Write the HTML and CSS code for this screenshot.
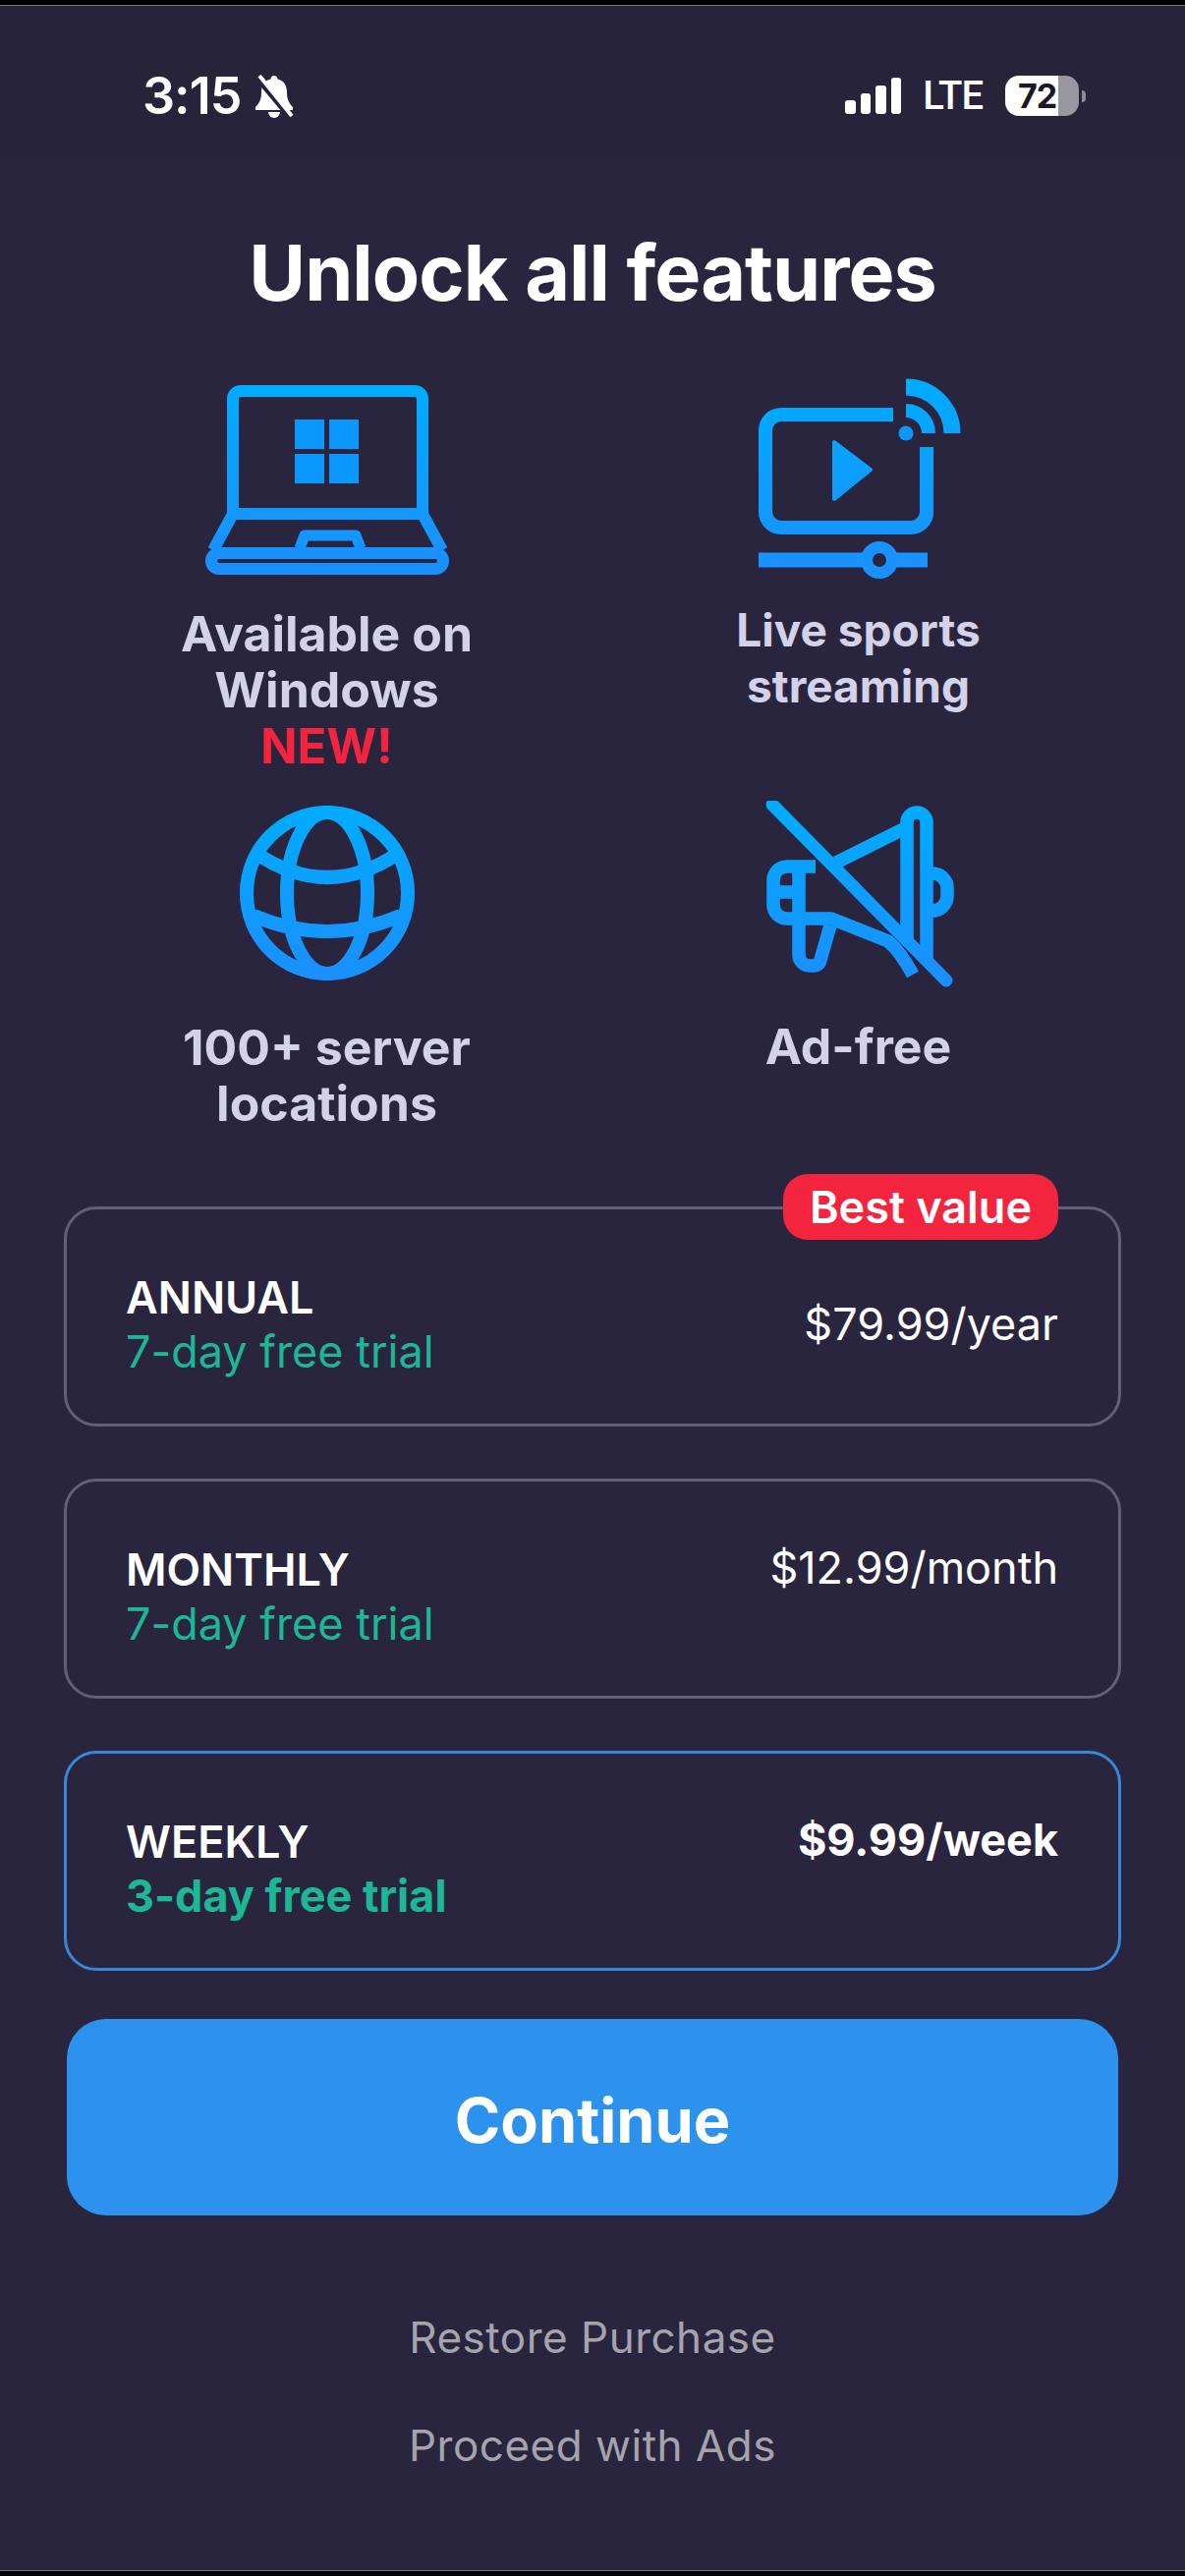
FILE: index.html
```html
<!DOCTYPE html>
<html lang="en">
<head>
<meta charset="utf-8">
<title>Unlock all features</title>
<link rel="stylesheet" href="styles.css">
</head>
<body>
<div class="screen">
  <div class="edge edge-top"></div>
  <header class="status">
    <div class="status-left">
      <span class="time">3:15</span>
      <svg class="bell" viewBox="0 0 42 44" aria-hidden="true">
        <path class="bell-body" d="M21 1c2 0 3.500 1.500 3.500 3.500C31 6 34 11 34 18c0 7 2 11 6 15v3H2v-3c4-4 6-8 6-15C8 11 11 6 17.500 4.500 17.500 2.500 19 1 21 1z"/>
        <path class="bell-body" d="M15 38h12a6 6 0 0 1-12 0z"/>
        <path class="bell-gap" d="M2 1l36 43"/>
        <path class="bell-slash" d="M6 1l33 41"/>
      </svg>
    </div>
    <div class="status-right">
      <div class="signal"><i class="bar b1"></i><i class="bar b2"></i><i class="bar b3"></i><i class="bar b4"></i></div>
      <span class="lte">LTE</span>
      <div class="battery"><span class="battery-num">72</span></div>
      <i class="battery-nub"></i>
    </div>
  </header>

  <main class="main">
    <h1 class="title">Unlock all features</h1>

    <section class="features">
      <div class="feature">
        <svg class="icon" width="304" height="232" viewBox="0 25 304 232" aria-hidden="true">
          <defs><linearGradient id="g1" gradientUnits="userSpaceOnUse" x1="0" y1="30" x2="0" y2="226"><stop offset="0" stop-color="#00acff"/><stop offset="1" stop-color="#1b8fff"/></linearGradient></defs>
          <g fill="none" stroke="url(#g1)" stroke-width="12" stroke-linejoin="round">
            <path d="M56 163V46a8 8 0 0 1 8-8H241a8 8 0 0 1 8 8V163H56"/>
            <path d="M56 163L36 200M249 163L269 200"/>
            <rect x="34" y="203" width="236" height="16" rx="8"/>
            <path stroke-width="11" d="M124 198L129 185H181L186 198"/>
          </g>
          <g fill="#0a98ff">
            <rect x="119" y="67" width="30" height="30"/><rect x="154" y="67" width="30" height="30"/>
            <rect x="119" y="102" width="30" height="30"/><rect x="154" y="102" width="30" height="30"/>
          </g>
        </svg>
        <p class="feature-text">Available on<br>Windows</p>
        <p class="feature-new">NEW!</p>
      </div>

      <div class="feature">
        <svg class="icon" width="266" height="228" viewBox="0 25 266 228" aria-hidden="true">
          <defs><linearGradient id="g2" gradientUnits="userSpaceOnUse" x1="0" y1="25" x2="0" y2="232"><stop offset="0" stop-color="#00acff"/><stop offset="1" stop-color="#1b8fff"/></linearGradient></defs>
          <g fill="none" stroke="url(#g2)">
            <path stroke-width="14" d="M168 62H54a16 16 0 0 0-16 16V161a16 16 0 0 0 16 16H186a16 16 0 0 0 16-16V95"/>
            <path stroke-width="14" d="M181 58A23 23 0 0 1 204 81"/>
            <path stroke-width="17" d="M181 34A47 47 0 0 1 228 81"/>
            <path stroke-width="15" d="M31 210H138M170 210H203"/>
            <circle cx="154" cy="210" r="13" stroke-width="12"/>
          </g>
          <circle cx="181" cy="81" r="7.500" fill="#0a98ff"/>
          <path fill="url(#g2)" stroke="url(#g2)" stroke-width="4" stroke-linejoin="round" d="M108 90L108 148L145 118Z"/>
        </svg>
        <p class="feature-text feature-text-small">Live sports<br>streaming</p>
      </div>

      <div class="feature">
        <svg class="icon" width="226" height="223" viewBox="0 15 226 223" aria-hidden="true">
          <defs><linearGradient id="g3" gradientUnits="userSpaceOnUse" x1="0" y1="20" x2="0" y2="198"><stop offset="0" stop-color="#00acff"/><stop offset="1" stop-color="#1b8fff"/></linearGradient></defs>
          <g fill="none" stroke="url(#g3)" stroke-width="14">
            <circle cx="113" cy="109" r="82"/>
            <ellipse cx="113" cy="109" rx="41" ry="82"/>
            <path d="M40 68Q113 118 186 68"/>
            <path d="M38 132Q113 164 188 132"/>
          </g>
        </svg>
        <p class="feature-text">100+ server<br>locations</p>
      </div>

      <div class="feature">
        <svg class="icon" width="246" height="222" viewBox="0 15 246 222" aria-hidden="true">
          <defs><linearGradient id="g4" gradientUnits="userSpaceOnUse" x1="0" y1="20" x2="0" y2="200"><stop offset="0" stop-color="#00acff"/><stop offset="1" stop-color="#1b8fff"/></linearGradient></defs>
          <g fill="none" stroke="url(#g4)" stroke-width="13.500" stroke-linejoin="round">
            <path d="M172 157V37a10 10 0 0 1 20 0V178"/>
            <path d="M172 42L100 78"/>
            <path d="M192 89H198a15 15 0 0 1 15 15V112a15 15 0 0 1-15 15H192"/>
            <path d="M79 82H50a14 14 0 0 0-14 14V121a14 14 0 0 0 14 14H95L153 158Q165 168 178 192"/>
            <path d="M36 108H62"/>
            <path d="M62 82V172a11 11 0 0 0 11 11H77a7 7 0 0 0 7-6L94 142"/>
            <path stroke-width="13" stroke-linecap="round" d="M35 19L212 198"/>
          </g>
        </svg>
        <p class="feature-text">Ad-free</p>
      </div>
    </section>

    <section class="plans">
      <div class="plan">
        <span class="badge">Best value</span>
        <div class="plan-info">
          <div class="plan-name">ANNUAL</div>
          <div class="plan-trial">7-day free trial</div>
        </div>
        <div class="plan-price plan-price-center">$79.99/year</div>
      </div>
      <div class="plan">
        <div class="plan-info">
          <div class="plan-name">MONTHLY</div>
          <div class="plan-trial">7-day free trial</div>
        </div>
        <div class="plan-price">$12.99/month</div>
      </div>
      <div class="plan plan-selected">
        <div class="plan-info">
          <div class="plan-name">WEEKLY</div>
          <div class="plan-trial">3-day free trial</div>
        </div>
        <div class="plan-price">$9.99/week</div>
      </div>
    </section>

    <button class="continue" type="button">Continue</button>

    <div class="links">
      <a class="link">Restore Purchase</a>
      <a class="link">Proceed with Ads</a>
    </div>
  </main>
  <div class="edge edge-bottom"></div>
</div>
</body>
</html>
```

FILE: styles.css
```css
* { box-sizing: border-box; }
html, body { margin: 0; padding: 0; }
body {
  background: #29253f;
  font-family: "Inter", "Liberation Sans", sans-serif;
  color: #fff;
}
.screen {
  width: 1206px;
  height: 2622px;
  display: flex;
  flex-direction: column;
  overflow: hidden;
  background: #29253f;
}
.edge { background: #000; flex: none; }
.edge-top { height: 6px; border-bottom: 1px solid #77767e; }
.edge-bottom { height: 6px; margin-top: auto; border-top: 1px solid #77767e; }

.status {
  flex: none;
  height: 185px;
  padding: 0 101px 0 145px;
  display: flex;
  justify-content: space-between;
  align-items: flex-start;
  background: linear-gradient(#26233b 0, #26233b 154px, #28243d 154px);
}
.status-left, .status-right { display: flex; align-items: center; height: 41px; margin-top: 71px; }
.time { font-size: 52px; font-weight: 600; letter-spacing: -1px; line-height: 41px; }
.bell { width: 42px; height: 44px; margin-left: 13px; }
.bell-body { fill: #fff; }
.bell-gap { stroke: #26233b; stroke-width: 6; fill: none; }
.bell-slash { stroke: #fff; stroke-width: 4; fill: none; }

.signal { display: flex; align-items: flex-end; gap: 5px; height: 37px; }
.bar { display: block; width: 10.500px; background: #fff; border-radius: 3px; }
.b1 { height: 14px; }
.b2 { height: 21px; }
.b3 { height: 29px; }
.b4 { height: 37px; }
.lte { font-family: "Roboto", sans-serif; font-size: 40px; font-weight: 500; margin-left: 22px; line-height: 41px; letter-spacing: -1px; }
.battery {
  width: 75px; height: 41px; margin-left: 23px; border-radius: 14px;
  background: linear-gradient(90deg, #fff 0, #fff 54px, #98969f 54px);
  display: flex; align-items: center; padding-left: 13px;
}
.battery-num { color: #1a1826; font-size: 34px; font-weight: 700; line-height: 1; letter-spacing: -1px; }
.battery-nub { display: block; width: 4px; height: 12px; margin-left: 3px; background: #8f8d9a; border-radius: 0 4px 4px 0; }

.main { flex: none; display: flex; flex-direction: column; align-items: center; }
.title { margin: 41px 0 0; font-size: 79px; font-weight: 700; line-height: 90px; letter-spacing: -1px; text-align: center; }

.features {
  margin-top: 63px;
  width: 1082px;
  display: grid;
  grid-template-columns: 1fr 1fr;
  row-gap: 27px;
}
.feature { display: flex; flex-direction: column; align-items: center; text-align: center; }
.icon { display: block; flex: none; }
.feature-text { margin: 0; font-size: 50px; font-weight: 700; line-height: 57px; color: #d4d2e8; }
.feature-text-small { font-size: 46px; }
.feature-new { margin: 0; font-size: 49px; font-weight: 700; line-height: 57px; color: #f4243f; }

.plans { margin-top: 76px; width: 1076px; display: flex; flex-direction: column; gap: 53px; }
.plan {
  position: relative;
  height: 224px;
  padding: 16px 61px 0 60px;
  display: flex;
  justify-content: space-between;
  align-items: center;
  border: 3px solid #625e7c;
  border-radius: 33px;
}
.plan-selected { border-color: #3a86d8; }
.plan-info { display: flex; flex-direction: column; }
.plan-name { font-size: 45px; font-weight: 600; line-height: 54px; }
.plan-trial { font-size: 45px; line-height: 55px; color: #1cb797; }
.plan-price { align-self: flex-start; margin-top: 45px; font-size: 45px; line-height: 54px; }
.plan-price-center { align-self: center; margin-top: 0; }
.plan-selected .plan-trial { font-weight: 700; }
.plan-selected .plan-price { font-weight: 700; }
.badge {
  position: absolute;
  top: -36px;
  right: 61px;
  height: 67px;
  padding: 0 27px;
  display: flex;
  align-items: center;
  border-radius: 25px;
  background: #f4243f;
  font-size: 45px;
  font-weight: 600;
}

.continue {
  margin-top: 49px;
  width: 1070px;
  height: 200px;
  padding-top: 6px;
  border: 0;
  border-radius: 40px;
  background: #2d92ee;
  color: #fff;
  font-family: inherit;
  font-size: 63px;
  font-weight: 700;
}
.links { margin-top: 94px; display: flex; flex-direction: column; align-items: center; gap: 50px; }
.link { font-size: 44px; line-height: 60px; color: #a5a3ad; letter-spacing: 0.5px; }
```
